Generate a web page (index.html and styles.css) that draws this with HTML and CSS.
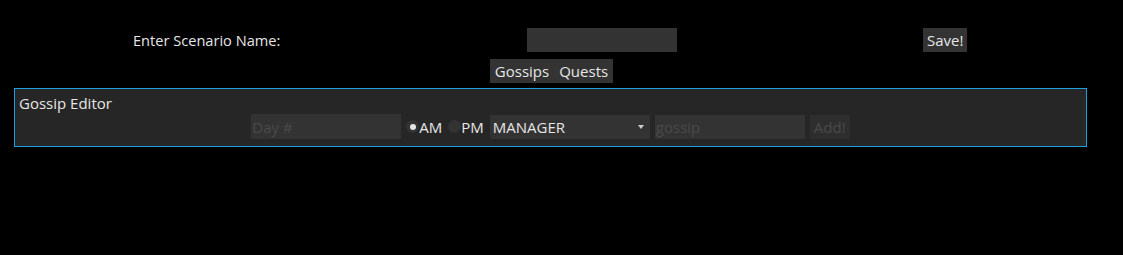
FILE: index.html
```html
<!DOCTYPE html>
<html>
<head>
<meta charset="utf-8">
<link rel="stylesheet" href="styles.css">
</head>
<body>
<div class="app">
  <div class="top-row">
    <span class="label">Enter Scenario Name:</span>
    <input class="field name-field" type="text">
    <button class="btn save-btn">Save!</button>
  </div>
  <div class="tabs">
    <button class="btn tab">Gossips</button><button class="btn tab">Quests</button>
  </div>
  <div class="panel">
    <div class="panel-title">Gossip Editor</div>
    <div class="editor-row">
      <input class="field day-field" type="text" placeholder="Day #">
      <label class="radio"><span class="dot checked"></span>AM</label>
      <label class="radio"><span class="dot"></span>PM</label>
      <div class="select">MANAGER<span class="arrow"></span></div>
      <input class="field gossip-field" type="text" placeholder="gossip">
      <button class="btn add-btn" disabled>Add!</button>
    </div>
  </div>
</div>
</body>
</html>
```
FILE: styles.css
```css
html, body {
  margin: 0;
  padding: 0;
  background: #000;
}
body {
  font-family: "Open Sans", "Noto Sans", sans-serif;
  font-size: 15px;
  color: #e6e6e6;
}
.app {
  padding: 28px 36px 0 14px;
}
.top-row {
  display: grid;
  grid-template-columns: 394px 396px auto;
  align-items: center;
  padding-left: 119px;
  height: 24px;
}
.label {
  line-height: 24px;
  font-size: 14.6px;
}
.field {
  box-sizing: border-box;
  width: 150px;
  height: 24px;
  border: none;
  outline: none;
  background: #333;
  color: #e6e6e6;
  font-family: inherit;
  font-size: 15px;
  padding: 0 1px;
  margin: 0;
}
.field::placeholder {
  color: #4a4a4a;
}
.btn {
  border: none;
  background: #333;
  color: #e6e6e6;
  font-family: inherit;
  font-size: 15px;
  height: 24px;
  padding: 0 4px;
  margin: 0;
  line-height: 24px;
}
.save-btn {
  justify-self: start;
}
.tabs {
  display: flex;
  justify-content: center;
  margin-top: 7px;
  padding-left: 2px;
}
.tab {
  padding: 0 5px;
}
.panel {
  margin-top: 5px;
  width: 1071px;
  height: 57px;
  border: 1px solid #1a9fe0;
  background: #262626;
  box-sizing: content-box;
}
.panel-title {
  padding: 5px 0 0 4px;
  line-height: 19px;
}
.editor-row {
  display: flex;
  justify-content: center;
  align-items: center;
  margin-top: 1px;
  padding-left: 0;
  height: 25px;
}
.day-field {
  height: 25px;
}
.radio {
  display: flex;
  align-items: center;
  margin-left: 5px;
}
.dot {
  width: 13px;
  height: 13px;
  border-radius: 50%;
  background: #333;
  display: flex;
  align-items: center;
  justify-content: center;
}
.dot.checked::after {
  content: "";
  width: 6px;
  height: 6px;
  border-radius: 50%;
  background: #e6e6e6;
}
.radio + .radio {
  margin-left: 6px;
}
.select {
  box-sizing: border-box;
  width: 160px;
  height: 24px;
  margin-left: 6px;
  background: #333;
  display: flex;
  align-items: center;
  padding: 0 3px;
  position: relative;
  line-height: 24px;
}
.arrow {
  position: absolute;
  right: 6px;
  top: 10px;
  width: 0;
  height: 0;
  border-left: 3px solid transparent;
  border-right: 3px solid transparent;
  border-top: 4px solid #d0d0d0;
}
.gossip-field {
  margin-left: 5px;
}
.add-btn {
  margin-left: 5px;
  background: #2e2e2e;
  color: #4a4a4a;
}
```
